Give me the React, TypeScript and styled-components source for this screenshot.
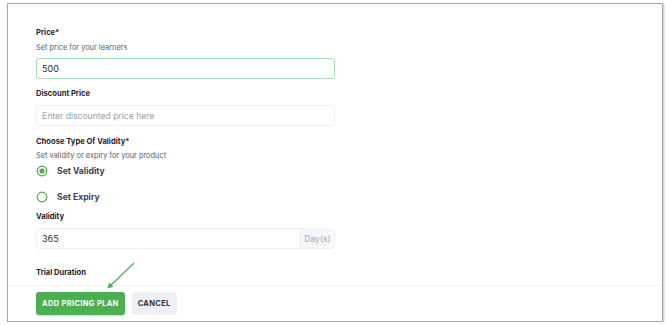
import styled, { createGlobalStyle } from 'styled-components';

const GlobalStyle = createGlobalStyle`
  body {
    margin: 0;
    background: #ffffff;
    font-family: Inter, "Noto Sans", sans-serif;
  }
`;

const Frame = styled.div`
  position: relative;
  box-sizing: border-box;
  margin: 3px 0 0 7px;
  width: 656px;
  height: 319px;
  border: 1px solid #a9a9a9;
  box-shadow: 1px 1px 2px rgba(0, 0, 0, 0.25);
  background: #fff;
  display: flex;
  flex-direction: column;
  overflow: hidden;
`;

const Form = styled.div`
  flex: 1;
  display: flex;
  flex-direction: column;
  padding: 23px 28px 0;
`;

const Label = styled.div<{ $mt?: number }>`
  margin-top: ${p => p.$mt ?? 0}px;
  font-size: 7.6px;
  line-height: 12px;
  font-weight: 700;
  color: #1f2430;
`;

const Hint = styled.div<{ $mt?: number }>`
  margin-top: ${p => p.$mt ?? 0}px;
  font-size: 7.4px;
  line-height: 12px;
  color: #5b6170;
`;

const InputBox = styled.div<{ $focus?: boolean; $mt?: number }>`
  margin-top: ${p => p.$mt ?? 0}px;
  box-sizing: border-box;
  width: 299px;
  height: 21px;
  display: flex;
  align-items: stretch;
  border: 1px solid ${p => (p.$focus ? '#a9dcab' : '#eef0f4')};
  border-radius: 3px;
  overflow: hidden;
`;

const Field = styled.div<{ $placeholder?: boolean }>`
  flex: 1;
  display: flex;
  align-items: center;
  padding-left: 5px;
  font-size: ${p => (p.$placeholder ? 8.6 : 9)}px;
  color: ${p => (p.$placeholder ? '#9aa0ad' : '#2a2f3a')};
`;

const Addon = styled.div`
  width: 33px;
  display: flex;
  align-items: center;
  justify-content: center;
  background: #f5f7fa;
  border-left: 1px solid #eef0f4;
  font-size: 8.6px;
  color: #a0a6b4;
`;

const RadioRow = styled.div<{ $mt?: number }>`
  margin-top: ${p => p.$mt ?? 0}px;
  height: 16px;
  display: flex;
  align-items: center;
  gap: 9px;
`;

const RadioText = styled.span`
  font-size: 8.6px;
  font-weight: 700;
  color: #3b4354;
`;

const Footer = styled.div`
  height: 36px;
  box-sizing: border-box;
  border-top: 1px solid #f2f3f5;
  padding: 6px 28px 0;
  display: flex;
  gap: 7px;
  align-items: flex-start;
`;

const Button = styled.button<{ $primary?: boolean }>`
  height: 23px;
  padding: 0 6px;
  border: none;
  border-radius: 3px;
  font-family: Inter, "Noto Sans", sans-serif;
  font-size: 7.4px;
  font-weight: 700;
  letter-spacing: 0.4px;
  background: ${p => (p.$primary ? '#4caf50' : '#eef0f6')};
  color: ${p => (p.$primary ? '#ffffff' : '#2b3140')};
  box-shadow: ${p => (p.$primary ? '0 1px 1px rgba(0,0,0,0.15)' : 'none')};
`;

const Arrow = styled.svg`
  position: absolute;
  left: 0;
  top: 0;
  pointer-events: none;
`;

function Radio({ checked }: { checked?: boolean }) {
  return (
    <svg width="12" height="12" viewBox="0 0 12 12">
      <circle cx="6" cy="6" r="4.8" fill="none" stroke="#4caf50" strokeWidth="1.2" />
      {checked && <circle cx="6" cy="6" r="2.6" fill="#4caf50" />}
    </svg>
  );
}

export default function App() {
  return (
    <>
      <GlobalStyle />
      <Frame>
        <Form>
          <Label>Price*</Label>
          <Hint $mt={3}>Set price for your learners</Hint>
          <InputBox $focus $mt={4}>
            <Field>500</Field>
          </InputBox>
          <Label $mt={9}>Discount Price</Label>
          <InputBox $mt={5}>
            <Field $placeholder>Enter discounted price here</Field>
          </InputBox>
          <Label $mt={10}>Choose Type Of Validity*</Label>
          <Hint $mt={2}>Set validity or expiry for your product</Hint>
          <RadioRow $mt={1}>
            <Radio checked />
            <RadioText>Set Validity</RadioText>
          </RadioRow>
          <RadioRow $mt={10}>
            <Radio />
            <RadioText>Set Expiry</RadioText>
          </RadioRow>
          <Label $mt={6}>Validity</Label>
          <InputBox $mt={5}>
            <Field>365</Field>
            <Addon>Day(s)</Addon>
          </InputBox>
          <Label $mt={18}>Trial Duration</Label>
        </Form>
        <Footer>
          <Button $primary>ADD PRICING PLAN</Button>
          <Button>CANCEL</Button>
        </Footer>
        <Arrow width="656" height="319" viewBox="0 0 656 319">
          <line x1="126" y1="259" x2="101" y2="283" stroke="#4caf50" strokeWidth="1.2" />
          <path d="M99.5 284.5 L101.2 278.6 L105.4 282.8 Z" fill="#4caf50" />
        </Arrow>
      </Frame>
    </>
  );
}
